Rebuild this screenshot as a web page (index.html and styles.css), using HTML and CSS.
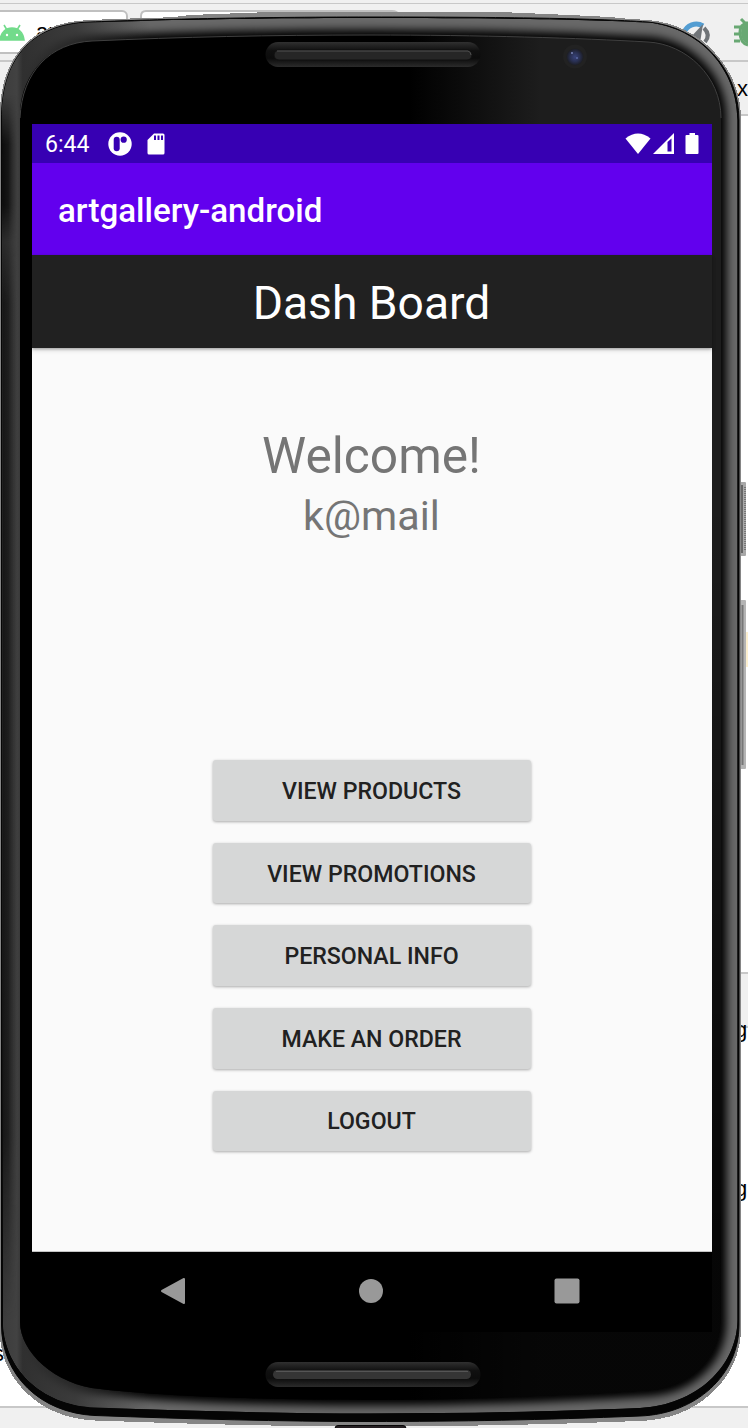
FILE: index.html
```html
<!DOCTYPE html>
<html lang="en">
<head>
<meta charset="utf-8">
<title>artgallery-android</title>
<link rel="stylesheet" href="styles.css">
</head>
<body>
<div class="stage">
  <svg class="device" width="748" height="1428" viewBox="0 0 748 1428" aria-hidden="true">
    <defs>
      <path id="body" d="M1.5 120C1.5 62 28 24 90 22C150 19.5 250 17 370 17C490 17 590 18 648 22C701 27 739 70 739 120V1325C739 1375 696 1414 640 1416C540 1420 460 1421.500 370 1421.500C280 1421.500 190 1419 95 1415.500C40 1413 1.500 1375 1.500 1325Z"/>
      <path id="rim" d="M2 120C2 62 28 24.500 90 22.500C150 20 250 18 370 18C490 18 590 19 648 22.500C701 28 737.500 70 737.500 120V1320C737 1367 696 1405 640 1408C540 1412 460 1413.500 370 1413.500C280 1413.500 190 1411 95 1407.500C40 1405 3 1367 3 1320Z"/>
      <path id="face" d="M20 112C22 72 50 43 92 41C180 37 270 35 370 35C480 35 580 38 648 42C686 44 721 76 721 118V1323C720 1360 690 1388 650 1391C560 1397 460 1400 370 1400C280 1400 170 1397 100 1389C55 1385 20 1352 20 1322Z"/>
      <clipPath id="rimClip"><use href="#rim"/></clipPath>
      <filter id="soft" x="-10%" y="-10%" width="120%" height="120%"><feGaussianBlur stdDeviation="4"/></filter>
      <linearGradient id="leftRim" gradientUnits="userSpaceOnUse" x1="2" x2="150" y1="0" y2="0">
        <stop offset="0" stop-color="#3c3c3c"/><stop offset=".1" stop-color="#424242"/><stop offset=".14" stop-color="#303030"/><stop offset=".5" stop-color="#303030" stop-opacity=".8"/><stop offset="1" stop-color="#333" stop-opacity="0"/>
      </linearGradient>
      <linearGradient id="leftDark" gradientUnits="userSpaceOnUse" x1="2" x2="18" y1="0" y2="0">
        <stop offset="0" stop-color="#0c0c0c"/><stop offset=".4" stop-color="#121212" stop-opacity=".9"/><stop offset="1" stop-color="#222" stop-opacity="0"/>
      </linearGradient>
      <linearGradient id="leftFade" x1="0" x2="0" y1="0" y2="1">
        <stop offset="0" stop-color="#fff" stop-opacity="0"/><stop offset=".04" stop-color="#fff"/><stop offset=".09" stop-color="#fff"/><stop offset=".12" stop-color="#fff" stop-opacity=".4"/><stop offset=".17" stop-color="#fff" stop-opacity=".8"/><stop offset=".85" stop-color="#fff" stop-opacity=".8"/><stop offset="1" stop-color="#fff" stop-opacity="0"/>
      </linearGradient>
      <mask id="leftMask" maskUnits="userSpaceOnUse" x="0" y="95" width="20" height="1225"><rect y="95" width="20" height="1225" fill="url(#leftFade)"/></mask>
      <linearGradient id="sheen" gradientUnits="userSpaceOnUse" x1="410" x2="540" y1="0" y2="0">
        <stop offset="0" stop-color="#1d1d1d" stop-opacity="0"/><stop offset="1" stop-color="#1d1d1d"/>
      </linearGradient>
      <linearGradient id="shade" gradientUnits="userSpaceOnUse" x1="0" x2="0" y1="500" y2="1250">
        <stop offset="0" stop-color="#000" stop-opacity="0"/><stop offset="1" stop-color="#000" stop-opacity=".78"/>
      </linearGradient>
      <linearGradient id="well" x1="0" x2="0" y1="0" y2="1">
        <stop offset="0" stop-color="#303030"/><stop offset=".35" stop-color="#101010"/><stop offset=".65" stop-color="#0c0c0c"/><stop offset="1" stop-color="#2b2b2b"/>
      </linearGradient>
      <radialGradient id="lens"><stop offset="0" stop-color="#38437a"/><stop offset=".55" stop-color="#293052"/><stop offset="1" stop-color="#1c1d22"/></radialGradient>
    </defs>

    <!-- desktop window behind the device -->
    <g shape-rendering="crispEdges">
      <rect width="748" height="1428" fill="#fff"/>
      <rect width="748" height="115" fill="#f0f0f0"/>
      <rect y="3" width="748" height="1" fill="#c8c8c8"/>
      <rect y="60" width="748" height="2" fill="#c8c8c8"/>
      <rect x="738" y="114" width="10" height="2" fill="#c8c8c8"/>
      <rect x="740" y="972" width="8" height="55" fill="#f0f0f0"/>
      <rect x="740" y="972" width="8" height="2" fill="#c8c8c8"/>
      <rect x="740" y="1026" width="8" height="2" fill="#c8c8c8"/>
      <rect y="1406" width="748" height="22" fill="#f0f0f0"/>
      <rect y="1406" width="748" height="2" fill="#c8c8c8"/>
      <rect x="746" y="632" width="2" height="35" fill="#fdf0d0"/>
    </g>
    <rect x="-10" y="11" width="137" height="42" rx="5" fill="#fff" stroke="#c0c0c0" stroke-width="2"/>
    <path d="M141 24V16Q141 11 146 11H260V24Z" fill="#fff"/>
    <path d="M141 24V16Q141 11 146 11H392Q397 11 398 14" fill="none" stroke="#c0c0c0" stroke-width="2"/>
    <path d="M0 40C1 32 6 28 12 28S23 32 24 40ZM4 25L7 30M20 25L17 30" fill="#72db8b" stroke="#72db8b" stroke-width="1.600"/>
    <circle cx="7" cy="35" r="1.200" fill="#fff"/><circle cx="17" cy="35" r="1.200" fill="#fff"/>
    <path d="M684 33A13 13 0 0 1 703 26" fill="none" stroke="#539dd2" stroke-width="5"/>
    <path d="M690 38L703 24L700 43Z" fill="#707478"/>
    <path d="M704 28Q711 35 705 42" fill="none" stroke="#707478" stroke-width="4"/>
    <path d="M748 23H745L741 19M748 23Q740 24 740 32Q740 43 748 45M740 27H734M740 34H734M740 41H734" fill="none" stroke="#68a873" stroke-width="3"/>
    <path d="M748 23Q741 25 741 33T748 44Z" fill="#68a873"/>
    <g class="desk-text">
      <text x="36" y="39">ar</text><text x="737" y="96">x</text>
      <text x="735" y="1037">g</text><text x="735" y="1196">g</text><text x="-7" y="1361">s</text>
    </g>

    <!-- side keys -->
    <rect x="740" y="482" width="6" height="74" rx="1" fill="#a8a8a8"/><path d="M742 485V553" stroke="#666" stroke-width="2"/>
    <path d="M745 487V550" stroke="#777" stroke-width="2" stroke-dasharray="1 1"/>
    <rect x="740" y="600" width="6" height="169" rx="1" fill="#b4b4b4"/><path d="M742.500 605V765" stroke="#777" stroke-width="2"/>

    <!-- chassis -->
    <g shape-rendering="crispEdges" fill="#858585" stroke="#858585" stroke-width="4">
      <use href="#body"/><use href="#body" transform="translate(0 3)"/>
      <path d="M150 20L190 15L270 12H500L570 15L610 17L650 21V30H150Z" stroke="none"/>
    </g>
    <use href="#body" fill="#050505" stroke="#050505" stroke-width="1"/>
    <g clip-path="url(#rimClip)">
      <use href="#rim" fill="#686868"/>
      <use href="#face" fill="#000" stroke="#000" stroke-width="11" filter="url(#soft)"/>
      <path d="M0 0H150V1428H0Z" fill="url(#leftRim)"/>
      <rect x="0" y="95" width="20" height="1225" fill="url(#leftDark)" mask="url(#leftMask)"/>
    </g>
    <use href="#face" fill="#000"/>
    <use href="#face" fill="url(#sheen)"/>
    <use href="#face" fill="url(#shade)"/>
    <path d="M20 118C22 72 50 43 92 41C180 37 270 35 370 35C480 35 580 38 648 42C686 44 721 76 721 118" fill="none" stroke="#404040"/>

    <!-- speakers and camera -->
    <rect x="265.500" y="42" width="215" height="25" rx="12.500" fill="url(#well)"/>
    <rect x="274" y="50" width="198" height="10" rx="5" fill="#262626" stroke="#111" stroke-width="1"/>
    <path d="M277 51H468Q471 52 471 55" fill="none" stroke="#505050"/>
    <rect x="265.500" y="1362" width="215" height="25" rx="12.500" fill="url(#well)"/>
    <rect x="273" y="1370" width="198" height="9" rx="4.500" fill="#353535"/>
    <path d="M276 1371.500H468" stroke="#555"/>
    <circle cx="575" cy="56.500" r="12" fill="#222"/><circle cx="575" cy="57" r="8.500" fill="url(#lens)"/>
    <circle cx="572" cy="53" r="1" fill="#7985b6"/><circle cx="577" cy="58" r="1" fill="#5d6aa4"/>
    <rect x="335" y="1425.500" width="71" height="8" rx="3" fill="#251f22" stroke="#050505"/>
  </svg>

  <main class="screen">
    <header class="status">
      <span class="time">6:44</span>
      <svg class="app-dot" width="24" height="24" viewBox="0 0 24 24"><circle cx="12" cy="12" r="11.700" fill="#fff"/><rect x="5.700" y="4.700" width="6" height="14.500" rx="3" fill="#3700b3"/><circle cx="15.700" cy="7.700" r="3.100" fill="#3700b3"/></svg>
      <svg class="sd" width="18" height="22" viewBox="0 0 18 22"><path d="M7 .5H16Q17.500 .5 17.500 2V20Q17.500 21.500 16 21.500H2Q.5 21.500 .5 20V7Z" fill="#fff"/><path d="M8 2.500V7M11.500 2.500V7M15 2.500V7" stroke="#3700b3" stroke-width="2"/></svg>
      <svg class="signals" width="76" height="24" viewBox="0 0 76 24"><path d="M.5 6.500Q13-3.500 25.500 6.500L13 22Z" fill="#fff"/><path fill-rule="evenodd" d="M28 22L49 1V22ZM42.500 10V19.500H46.500V6.500Z" fill="#fff"/><path d="M64.500 1H70V3H72.500Q73.500 3 73.500 4V21Q73.500 22 72.500 22H61.500Q60.500 22 60.500 21V4Q60.500 3 61.500 3H64.500Z" fill="#fff"/></svg>
    </header>
    <div class="app-bar">artgallery-android</div>
    <h1 class="heading">Dash Board</h1>
    <section class="content">
      <p class="welcome">Welcome!</p>
      <p class="account">k@mail</p>
      <div class="actions">
        <button class="action">VIEW PRODUCTS</button>
        <button class="action">VIEW PROMOTIONS</button>
        <button class="action">PERSONAL INFO</button>
        <button class="action">MAKE AN ORDER</button>
        <button class="action">LOGOUT</button>
      </div>
    </section>
    <nav class="nav">
      <svg width="26" height="28" viewBox="0 0 26 28"><path d="M2 14L24 2V26Z" fill="#999" stroke="#999" stroke-width="2" stroke-linejoin="round"/></svg>
      <svg width="26" height="28" viewBox="0 0 26 28"><circle cx="14" cy="14" r="12" fill="#999"/></svg>
      <svg width="26" height="28" viewBox="0 0 26 28"><rect x=".5" y="1.500" width="25" height="25" rx="2" fill="#999"/></svg>
    </nav>
  </main>
</div>
</body>
</html>
```
FILE: styles.css
```css
body {
  margin: 0;
  font-family: Roboto, sans-serif;
}

.stage {
  position: relative;
  box-sizing: border-box;
  width: 748px;
  height: 1428px;
  padding: 124px 36px 96px 32px;
  overflow: hidden;
}

.device {
  position: absolute;
  top: 0;
  left: 0;
}

.desk-text {
  font: 22px "Liberation Sans", Arial, sans-serif;
  fill: #000;
}

.screen {
  position: relative;
  display: flex;
  flex-direction: column;
  width: 680px;
  height: 1208px;
  background: #fafafa;
}

.status {
  display: flex;
  align-items: center;
  box-sizing: border-box;
  height: 39px;
  padding: 0 11px 0 13px;
  background: #3700b3;
  color: #fff;
}

.time {
  width: 63px;
  font-size: 23.100px;
  line-height: 39px;
  padding-top: 2px;
}

.sd {
  margin-left: 15px;
}

.signals {
  margin-left: auto;
}

.app-bar {
  box-sizing: border-box;
  height: 92px;
  padding-left: 26px;
  background: #6200ee;
  color: #fff;
  font-size: 33.150px;
  font-weight: 500;
  line-height: 96px;
}

.heading {
  z-index: 1;
  height: 93px;
  margin: 0;
  padding-right: 1px;
  background: #212121;
  box-shadow: 0 1px 3px rgba(0, 0, 0, .35), 0 3px 5px rgba(0, 0, 0, .08);
  color: #fff;
  font-size: 46.200px;
  font-weight: 400;
  line-height: 97px;
  text-align: center;
}

.content {
  display: flex;
  flex-direction: column;
  align-items: center;
  box-sizing: border-box;
  height: 904px;
  padding: 76px 1px 0 0;
  border-bottom: 1px solid #c4c4c4;
  color: #757575;
}

.welcome,
.account {
  margin: 0;
}

.welcome {
  font-size: 49.700px;
  line-height: 64px;
}

.account {
  font-size: 41.300px;
  line-height: 56px;
}

.actions {
  display: flex;
  flex-direction: column;
  gap: 22.100px;
  width: 318px;
  margin-top: 216.300px;
}

.action {
  height: 60.500px;
  padding: 2px 0 0;
  border: 0;
  border-radius: 3px;
  background: #d6d7d7;
  box-shadow: 0 1px 3px rgba(0, 0, 0, .32);
  color: #212121;
  font-family: inherit;
  font-size: 23.150px;
  font-weight: 500;
}

.nav {
  display: flex;
  justify-content: space-between;
  box-sizing: border-box;
  height: 80px;
  padding: 25px 132px 0 128px;
  background: #000;
}
```
